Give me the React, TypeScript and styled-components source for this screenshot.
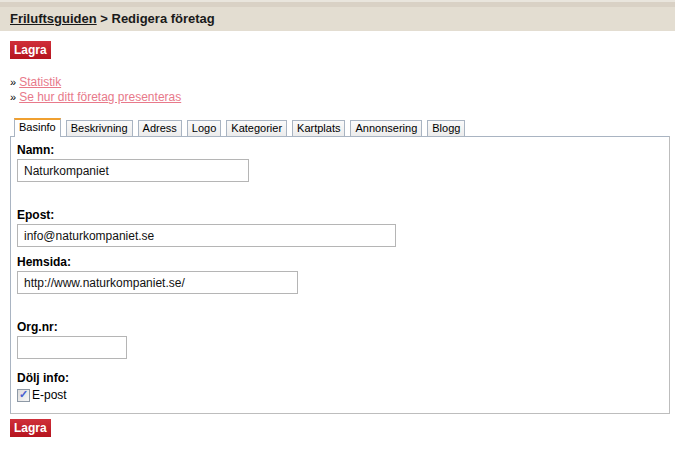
import React, { useState } from "react";
import styled, { createGlobalStyle } from "styled-components";

const GlobalStyle = createGlobalStyle`
  html, body {
    margin: 0;
    padding: 0;
    background: #fff;
    font-family: "Liberation Sans", Arial, sans-serif;
    font-size: 12px;
    color: #000;
  }
`;

const Header = styled.div`
  height: 31px;
  background: #e3ddd1;
  border-top: 2px solid #e9e5dd;
  box-shadow: inset 0 5px 0 #d9d1c5;
  box-sizing: border-box;
  display: flex;
  align-items: center;
  padding: 4px 10px 0;
  font-weight: bold;
  font-size: 13px;
  color: #1a1a1a;

  a {
    color: #1a1a1a;
    text-decoration: underline;
  }
`;

const Page = styled.div`
  padding: 10px 5px 0 10px;
`;

const SaveButton = styled.button`
  display: block;
  background: linear-gradient(#d0303a, #b5141e);
  color: #fff;
  border: none;
  font-family: "Liberation Sans", Arial, sans-serif;
  font-weight: bold;
  font-size: 12px;
  height: 18px;
  padding: 0 4px;
  line-height: 18px;
  cursor: pointer;
`;

const Links = styled.ul`
  list-style: none;
  margin: 16px 0 0;
  padding: 0;
  line-height: 15px;

  li::before {
    content: "»";
    font-size: 11px;
    margin-right: 3px;
  }

  a {
    color: #e8798a;
    text-decoration: underline;
  }
`;

const TabBar = styled.div`
  display: flex;
  gap: 5px;
  margin-top: 13px;
  padding-left: 4px;
  align-items: flex-end;
`;

const Tab = styled.div<{ $active?: boolean }>`
  font-size: 11px;
  padding: 0 4px;
  height: ${(p) => (p.$active ? "17px" : "15px")};
  line-height: 15px;
  border: 1px solid #a9b4c2;
  border-bottom: none;
  border-top: ${(p) => (p.$active ? "2px solid #f0a030" : "1px solid #a9b4c2")};
  background: ${(p) => (p.$active ? "#fff" : "linear-gradient(#fafafa, #ececec)")};
  margin-bottom: ${(p) => (p.$active ? "-1px" : "0")};
  position: relative;
  cursor: pointer;
`;

const Panel = styled.div`
  width: 660px;
  border: 1px solid #a9b4c2;
  border-bottom-color: #bdbdbd;
  border-right-color: #bdbdbd;
  box-sizing: border-box;
  padding: 6px 6px 11px;
`;

const Field = styled.div<{ $gap?: number }>`
  margin-top: ${(p) => p.$gap ?? 0}px;
`;

const Label = styled.div`
  font-weight: bold;
  font-size: 12px;
  line-height: 15px;
  margin-bottom: 1px;
`;

const Input = styled.input<{ $w: number }>`
  width: ${(p) => p.$w}px;
  height: 23px;
  box-sizing: border-box;
  border: 1px solid #b5b5b5;
  font-family: "Liberation Sans", Arial, sans-serif;
  font-size: 12px;
  padding: 0 6px;
  color: #111;
  display: block;
`;

const CheckRow = styled.label`
  display: flex;
  align-items: center;
  gap: 2px;
  font-size: 12px;
  margin-top: 2px;
`;

const CheckBox = styled.input`
  appearance: none;
  margin: 0;
  width: 13px;
  height: 13px;
  border: 1px solid #8e99a6;
  background: linear-gradient(135deg, #dcdcdc, #f6f6f6);
  position: relative;

  &:checked::after {
    content: "✓";
    position: absolute;
    left: 1px;
    top: -2px;
    font-size: 11px;
    font-weight: bold;
    color: #4a5fd0;
  }
`;

const Bottom = styled.div`
  margin-top: 5px;
`;

const tabs = ["Basinfo", "Beskrivning", "Adress", "Logo", "Kategorier", "Kartplats", "Annonsering", "Blogg"];

export default function App() {
  const [active, setActive] = useState(0);
  return (
    <>
      <GlobalStyle />
      <Header>
        <a href="#">Friluftsguiden</a>&nbsp;&gt; Redigera företag
      </Header>
      <Page>
        <SaveButton>Lagra</SaveButton>
        <Links>
          <li><a href="#">Statistik</a></li>
          <li><a href="#">Se hur ditt företag presenteras</a></li>
        </Links>
        <TabBar>
          {tabs.map((t, i) => (
            <Tab key={t} $active={i === active} onClick={() => setActive(i)}>
              {t}
            </Tab>
          ))}
        </TabBar>
        <Panel>
          <Field>
            <Label>Namn:</Label>
            <Input $w={232} defaultValue="Naturkompaniet" />
          </Field>
          <Field $gap={26}>
            <Label>Epost:</Label>
            <Input $w={379} defaultValue="info@naturkompaniet.se" />
          </Field>
          <Field $gap={8}>
            <Label>Hemsida:</Label>
            <Input $w={281} defaultValue="http://www.naturkompaniet.se/" />
          </Field>
          <Field $gap={26}>
            <Label>Org.nr:</Label>
            <Input $w={110} defaultValue="" />
          </Field>
          <Field $gap={12}>
            <Label>Dölj info:</Label>
            <CheckRow>
              <CheckBox type="checkbox" defaultChecked />
              E-post
            </CheckRow>
          </Field>
        </Panel>
        <Bottom>
          <SaveButton>Lagra</SaveButton>
        </Bottom>
      </Page>
    </>
  );
}
